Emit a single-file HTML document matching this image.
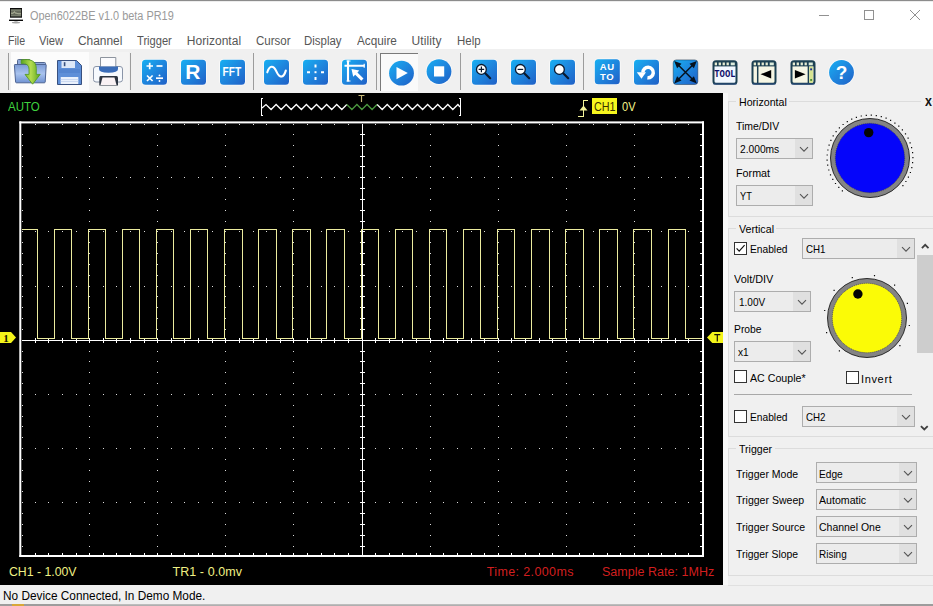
<!DOCTYPE html>
<html lang="en"><head><meta charset="utf-8"><title>Open6022BE v1.0 beta PR19</title>
<style>
html,body{margin:0;padding:0;background:#f0f0f0;}
#win{position:relative;width:933px;height:606px;overflow:hidden;background:#f0f0f0;font-family:"Liberation Sans", sans-serif;}
.abs{position:absolute;}
.t{position:absolute;transform-origin:0 0;white-space:nowrap;line-height:16px;height:16px;font-family:"Liberation Sans", sans-serif;}
.cb{position:absolute;border:1px solid #adadad;background:#ececec;}
.cbb{position:absolute;right:0;top:0;bottom:0;background:#e0e0e0;}
.ck{position:absolute;width:11px;height:11px;border:1px solid #333;background:#fff;}
.gb{position:absolute;border:1px solid #dcdcdc;box-sizing:border-box;}
</style></head>
<body><div id="win">
<div class="abs" style="left:0;top:0;width:933px;height:49px;background:#fff"></div>
<div class="abs" style="left:0;top:0;width:933px;height:1px;background:#8c8c8c"></div>
<div class="abs" style="left:0;top:1px;width:933px;height:1px;background:#ededed"></div>
<svg class="abs" style="left:8px;top:7px" width="16" height="17" viewBox="8 7 16 17"><rect x="10" y="8" width="12" height="9.7" fill="#0a0a0a"/><rect x="10.7" y="9.1" width="10.6" height="7.4" fill="#666a5c"/><path d="M11 13.2h2.4l1-1.6 1 1.6h1.6l0.8 0.6h3.2" stroke="#c8ccb0" stroke-width="0.8" fill="none"/><path d="M11 10.4h10M11 15.6h10" stroke="#8a8e80" stroke-width="0.6"/><rect x="9" y="19.6" width="14" height="1.4" fill="#0a0a0a"/><rect x="14.4" y="21" width="3.2" height="1.2" fill="#c4c4c4"/><ellipse cx="16" cy="22.6" rx="4.2" ry="0.9" fill="#a4a4a4"/></svg>
<svg class="abs" style="left:810px;top:4px" width="120" height="24" viewBox="810 4 120 24" shape-rendering="crispEdges"><path d="M819 15.5H829" stroke="#919191" stroke-width="1"/><rect x="864.5" y="10.5" width="9" height="9" fill="none" stroke="#919191" stroke-width="1"/><path d="M910 10L920 20M920 10L910 20" stroke="#919191" stroke-width="1" shape-rendering="geometricPrecision"/></svg>
<svg id="tb" width="933" height="44" viewBox="0 0 933 44" style="position:absolute;left:0;top:49px"><defs><linearGradient id="gb" x1="0" y1="0" x2="1" y2="1"><stop offset="0" stop-color="#17b0f2"/><stop offset="0.45" stop-color="#1e8ae0"/><stop offset="1" stop-color="#2060c6"/></linearGradient><linearGradient id="gf" x1="0" y1="0" x2="0" y2="1"><stop offset="0" stop-color="#7c9bd6"/><stop offset="0.5" stop-color="#a9c3ee"/><stop offset="1" stop-color="#6f92d2"/></linearGradient><linearGradient id="gg" x1="0" y1="0" x2="1" y2="0"><stop offset="0" stop-color="#5aa51e"/><stop offset="0.5" stop-color="#b4dc50"/><stop offset="1" stop-color="#5aa51e"/></linearGradient></defs><rect x="11" y="3" width="78" height="39" fill="#fcfcfc"/><rect x="89" y="3" width="40" height="39" fill="#f4f4f4"/><path d="M8.5 4V41" stroke="#9c9c9c" stroke-width="1" shape-rendering="crispEdges"/><path d="M130.5 4V41" stroke="#9c9c9c" stroke-width="1" shape-rendering="crispEdges"/><path d="M253.5 4V41" stroke="#9c9c9c" stroke-width="1" shape-rendering="crispEdges"/><path d="M376.5 4V41" stroke="#9c9c9c" stroke-width="1" shape-rendering="crispEdges"/><path d="M460.5 4V41" stroke="#9c9c9c" stroke-width="1" shape-rendering="crispEdges"/><path d="M583.5 4V41" stroke="#9c9c9c" stroke-width="1" shape-rendering="crispEdges"/><g transform="translate(0,-49)"><path d="M17.5 63V60.5Q17.5 59.5 18.5 59.5H29Q30 59.5 30.5 60.5L31.5 62.5H44.5Q45.5 62.5 45.5 63.5V65H17.5Z" fill="#8fa9da" stroke="#53678f" stroke-width="1"/><path d="M15 64.5H45.8Q46.3 64.5 46.2 65.2L45.2 82Q45.1 82.8 44.3 82.8H16.5Q15.7 82.8 15.6 82L14.4 65.2Q14.3 64.5 15 64.5Z" fill="url(#gf)" stroke="#4f6594" stroke-width="1"/><path d="M21.2 59.9C30 58.6 36.3 60.5 36.3 68.5V74.4H40.2L32.6 84.2L25 74.4H29V69.5C29 65 26.5 63.4 21.2 63.6Z" fill="url(#gg)" stroke="#4e961c" stroke-width="0.8"/></g><g transform="translate(0,-49)"><path d="M57.5 60.5H76.5L81.5 65.5V84.5H57.5Z" fill="#5e8fd8" stroke="#38507f" stroke-width="1"/><rect x="61.5" y="61" width="13.5" height="7" fill="#dde8f8"/><rect x="63.8" y="62.2" width="1.6" height="4" fill="#38507f"/><rect x="60.7" y="77" width="17.6" height="7" fill="#eaf1fc"/><path d="M60.7 79.5h17.6M60.7 81.5h17.6" stroke="#c3d3ee" stroke-width="0.8"/><rect x="59" y="69" width="21" height="4" fill="#4f7fcc" opacity="0.6"/></g><g transform="translate(0,-49)"><rect x="93.5" y="66.5" width="29" height="15.5" rx="2.5" fill="#f6f9fd" stroke="#8a95a8" stroke-width="1"/><path d="M100.5 67V57.5H115.8V67Z" fill="#fbfbfd" stroke="#8d949e" stroke-width="1"/><path d="M99 66.5H118V69Q118 72.8 108.5 72.8Q99 72.8 99 69Z" fill="#3a6cb8"/><path d="M100.5 76H116.5Q118 76 118 78V85.5H99.3V78Q99.3 76 100.5 76Z" fill="#2c3440"/><path d="M102.5 77.5H114.5L116.5 85H100.5Z" fill="#faf2f4"/></g><rect x="141.2" y="9.900000000000002" width="26.6" height="26.6" rx="4.2" fill="#fafafa"/><rect x="142" y="10.700000000000003" width="25" height="25" rx="3.5" fill="url(#gb)"/><g transform="translate(0,-49)" stroke="#fff" stroke-width="1.7" fill="none"><path d="M146.5 66H153M149.7 62.8V69.2"/><path d="M156.5 66H162.5"/><path d="M147 75.5L152.6 81M152.6 75.5L147 81"/><path d="M156 78.2H163"/></g><circle cx="159.5" cy="26.400000000000006" r="0.95" fill="#fff"/><circle cx="159.5" cy="32" r="0.95" fill="#fff"/><rect x="180.2" y="9.900000000000002" width="26.6" height="26.6" rx="4.2" fill="#fafafa"/><rect x="181" y="10.700000000000003" width="25" height="25" rx="3.5" fill="url(#gb)"/><text x="192.9" y="30.299999999999997" text-anchor="middle" font-family="Liberation Sans, sans-serif" font-weight="bold" font-size="21" fill="#fff">R</text><rect x="219.2" y="9.900000000000002" width="26.6" height="26.6" rx="4.2" fill="#fafafa"/><rect x="220" y="10.700000000000003" width="25" height="25" rx="3.5" fill="url(#gb)"/><text x="231.9" y="27" text-anchor="middle" font-family="Liberation Sans, sans-serif" font-weight="bold" font-size="12.4" fill="#fff" textLength="18.6" lengthAdjust="spacingAndGlyphs">FFT</text><rect x="263.2" y="9.900000000000002" width="26.6" height="26.6" rx="4.2" fill="#fafafa"/><rect x="264" y="10.700000000000003" width="25" height="25" rx="3.5" fill="url(#gb)"/><path d="M267.3 23.299999999999997C269.5 16 273.5 16 276.5 22.599999999999994S283.5 29.599999999999994 285.8 21.599999999999994" stroke="#fff" stroke-width="2.1" fill="none" stroke-linecap="round"/><rect x="302.2" y="9.900000000000002" width="26.6" height="26.6" rx="4.2" fill="#fafafa"/><rect x="303" y="10.700000000000003" width="25" height="25" rx="3.5" fill="url(#gb)"/><g transform="translate(0,-49)" stroke="#fff" stroke-width="2" fill="none"><path d="M315.5 64.5V67.5M315.5 77V80M307 72.2H310M321 72.2H324"/></g><rect x="314.5" y="22.200000000000003" width="2" height="2" fill="#fff"/><rect x="341.2" y="9.900000000000002" width="26.6" height="26.6" rx="4.2" fill="#fafafa"/><rect x="342" y="10.700000000000003" width="25" height="25" rx="3.5" fill="url(#gb)"/><g transform="translate(0,-49)" stroke="#fff" stroke-width="2.1" fill="none"><path d="M348 60.5V81.5M344.5 65.8H364.5"/><path d="M346.5 61h4M346.5 81h4M364.2 63.7v4" stroke-width="1.2"/></g><path d="M351.5 20L359.3 21.599999999999994L357.4 23.5L363.5 29.599999999999994L361.3 31.799999999999997L355.2 25.700000000000003L353.2 27.700000000000003Z" fill="#fff"/><rect x="381" y="5" width="37" height="37" fill="#fafafa"/><path d="M380.5 42V4.5H418" stroke="#7a7a7a" stroke-width="1" fill="none" shape-rendering="crispEdges"/><circle cx="401.5" cy="24.200000000000003" r="13.2" fill="#fafafa"/><circle cx="401.5" cy="24.200000000000003" r="12.4" fill="url(#gb)"/><path d="M396.5 18L407.8 24.099999999999994L396.5 30.200000000000003Z" fill="#fff"/><circle cx="439.0" cy="22.6" r="13.2" fill="#fafafa"/><circle cx="439.0" cy="22.6" r="12.4" fill="url(#gb)"/><rect x="434" y="17.299999999999997" width="10.2" height="10.2" fill="#fff"/><rect x="471.2" y="9.900000000000002" width="26.6" height="26.6" rx="4.2" fill="#fafafa"/><rect x="472" y="10.700000000000003" width="25" height="25" rx="3.5" fill="url(#gb)"/><path d="M484.7 23.700000000000006L490.2 29.200000000000006" stroke="#0a1a30" stroke-width="2.2" stroke-linecap="round"/><circle cx="481.4" cy="20.400000000000006" r="4.9" fill="#fff" stroke="#0a1a30" stroke-width="1.3"/><path d="M478.59999999999997 20.400000000000006H484.2M481.4 17.600000000000005V23.200000000000006" stroke="#0a1a30" stroke-width="1.2"/><rect x="510.2" y="9.900000000000002" width="26.6" height="26.6" rx="4.2" fill="#fafafa"/><rect x="511" y="10.700000000000003" width="25" height="25" rx="3.5" fill="url(#gb)"/><path d="M523.6999999999999 23.700000000000006L529.1999999999999 29.200000000000006" stroke="#0a1a30" stroke-width="2.2" stroke-linecap="round"/><circle cx="520.4" cy="20.400000000000006" r="4.9" fill="#fff" stroke="#0a1a30" stroke-width="1.3"/><path d="M517.6 20.400000000000006H523.1999999999999" stroke="#0a1a30" stroke-width="1.2"/><rect x="549.2" y="9.900000000000002" width="26.6" height="26.6" rx="4.2" fill="#fafafa"/><rect x="550" y="10.700000000000003" width="25" height="25" rx="3.5" fill="url(#gb)"/><path d="M562.6999999999999 23.700000000000006L568.1999999999999 29.200000000000006" stroke="#0a1a30" stroke-width="2.2" stroke-linecap="round"/><circle cx="559.4" cy="20.400000000000006" r="4.9" fill="#fff" stroke="#0a1a30" stroke-width="1.3"/><rect x="594.0" y="9.400000000000002" width="26.6" height="26.6" rx="4.2" fill="#fafafa"/><rect x="594.8" y="10.200000000000003" width="25" height="25" rx="3.5" fill="url(#gb)"/><text x="607.2" y="20.900000000000006" text-anchor="middle" font-family="Liberation Sans, sans-serif" font-weight="bold" font-size="9.5" fill="#fff" letter-spacing="0.6">AU</text><text x="607.2" y="30.599999999999994" text-anchor="middle" font-family="Liberation Sans, sans-serif" font-weight="bold" font-size="9.5" fill="#fff" letter-spacing="0.8">TO</text><rect x="633.2" y="9.900000000000002" width="26.6" height="26.6" rx="4.2" fill="#fafafa"/><rect x="634" y="10.700000000000003" width="25" height="25" rx="3.5" fill="url(#gb)"/><path d="M642.9 23.599999999999994A5.2 5.2 0 1 1 647.4 28.700000000000003" stroke="#fff" stroke-width="3.5" fill="none"/><path d="M636.8 23.299999999999997H646L641.5 29.799999999999997Z" fill="#fff"/><rect x="673.2" y="10.899999999999999" width="24.6" height="24.6" rx="3" fill="url(#gb)" stroke="#16304a" stroke-width="0.5"/><path d="M677 14.700000000000003L694 31.700000000000003M694 14.700000000000003L677 31.700000000000003" stroke="#06121e" stroke-width="1.5" fill="none"/><path d="M674.2 11.9L677.1 19.2L681.5 14.8ZM696.8 11.9L689.5 14.8L693.9 19.2ZM674.2 34.5L681.5 31.6L677.1 27.2ZM696.8 34.5L693.9 27.2L689.5 31.6Z" fill="#06121e"/><rect x="713.5" y="12.200000000000003" width="23" height="22.6" rx="2.6" fill="#f2f8ff" stroke="#1c4052" stroke-width="2"/><path d="M713.5 35H736.5" stroke="#2a4c88" stroke-width="0.9"/><path d="M713.5 13H736.5V17.400000000000006H713.5Z" fill="#1c4052"/><rect x="714.7" y="13.5" width="2.3" height="2.8" fill="#e6ecd2"/><rect x="718.6500000000001" y="13.5" width="2.3" height="2.8" fill="#e6ecd2"/><rect x="722.6" y="13.5" width="2.3" height="2.8" fill="#e6ecd2"/><rect x="726.5500000000001" y="13.5" width="2.3" height="2.8" fill="#e6ecd2"/><rect x="730.7" y="13.5" width="4.1" height="2.8" fill="#dcecdc"/><text x="724.9" y="27.900000000000006" text-anchor="middle" font-family="Liberation Mono, monospace" font-weight="bold" font-size="10" fill="#0e0e6a" textLength="21.4" lengthAdjust="spacingAndGlyphs">TOOL</text><rect x="752.5" y="12.200000000000003" width="23" height="22.6" rx="2.6" fill="#f6f6e4" stroke="#1c4052" stroke-width="2"/><path d="M752.5 35H775.5" stroke="#2a4c88" stroke-width="0.9"/><path d="M752.5 13H775.5V17.400000000000006H752.5Z" fill="#1c4052"/><rect x="753.7" y="13.5" width="2.3" height="2.8" fill="#e6ecd2"/><rect x="757.6500000000001" y="13.5" width="2.3" height="2.8" fill="#e6ecd2"/><rect x="761.6" y="13.5" width="2.3" height="2.8" fill="#e6ecd2"/><rect x="765.5500000000001" y="13.5" width="2.3" height="2.8" fill="#e6ecd2"/><rect x="769.7" y="13.5" width="4.1" height="2.8" fill="#dcecdc"/><path d="M757.7 17V34" stroke="#1c4052" stroke-width="1.5"/><path d="M760.5 25.200000000000003L771.2 21.099999999999994V29.5Z" fill="#000"/><rect x="791.5" y="12.200000000000003" width="23" height="22.6" rx="2.6" fill="#f6f6e4" stroke="#1c4052" stroke-width="2"/><path d="M791.5 35H814.5" stroke="#2a4c88" stroke-width="0.9"/><path d="M791.5 13H814.5V17.400000000000006H791.5Z" fill="#1c4052"/><rect x="792.7" y="13.5" width="2.3" height="2.8" fill="#e6ecd2"/><rect x="796.6500000000001" y="13.5" width="2.3" height="2.8" fill="#e6ecd2"/><rect x="800.6" y="13.5" width="2.3" height="2.8" fill="#e6ecd2"/><rect x="804.5500000000001" y="13.5" width="2.3" height="2.8" fill="#e6ecd2"/><rect x="808.7" y="13.5" width="4.1" height="2.8" fill="#dcecdc"/><path d="M808.4 17V34" stroke="#1c4052" stroke-width="1.5"/><path d="M805.6 25.200000000000003L794.9 21.099999999999994V29.5Z" fill="#000"/><rect x="809.3" y="17.599999999999994" width="3.6" height="16.2" fill="#d6e490"/><rect x="810.2" y="19.400000000000006" width="1.9" height="1.9" fill="#1a2a90"/><rect x="810.2" y="30" width="1.9" height="1.9" fill="#4a8a3a"/><circle cx="841.5" cy="23.4" r="13.2" fill="#fafafa"/><circle cx="841.5" cy="23.4" r="12.4" fill="url(#gb)"/><text x="841.6" y="30.400000000000006" text-anchor="middle" font-family="Liberation Sans, sans-serif" font-weight="bold" font-size="19" fill="#fff">?</text></svg>
<svg id="scope" width="723" height="492" viewBox="0 0 723 492" shape-rendering="crispEdges" style="position:absolute;left:0;top:93px;background:#000"><path d="M35 31.5h1M48 31.5h1M62 31.5h1M76 31.5h1M89 31.5h1M103 31.5h1M116 31.5h1M130 31.5h1M144 31.5h1M157 31.5h1M171 31.5h1M184 31.5h1M198 31.5h1M212 31.5h1M225 31.5h1M239 31.5h1M253 31.5h1M266 31.5h1M280 31.5h1M293 31.5h1M307 31.5h1M321 31.5h1M334 31.5h1M348 31.5h1M362 31.5h1M375 31.5h1M389 31.5h1M402 31.5h1M416 31.5h1M430 31.5h1M443 31.5h1M457 31.5h1M471 31.5h1M484 31.5h1M498 31.5h1M511 31.5h1M525 31.5h1M539 31.5h1M552 31.5h1M566 31.5h1M579 31.5h1M593 31.5h1M607 31.5h1M620 31.5h1M634 31.5h1M648 31.5h1M661 31.5h1M675 31.5h1M688 31.5h1M35 84.5h1M48 84.5h1M62 84.5h1M76 84.5h1M89 84.5h1M103 84.5h1M116 84.5h1M130 84.5h1M144 84.5h1M157 84.5h1M171 84.5h1M184 84.5h1M198 84.5h1M212 84.5h1M225 84.5h1M239 84.5h1M253 84.5h1M266 84.5h1M280 84.5h1M293 84.5h1M307 84.5h1M321 84.5h1M334 84.5h1M348 84.5h1M362 84.5h1M375 84.5h1M389 84.5h1M402 84.5h1M416 84.5h1M430 84.5h1M443 84.5h1M457 84.5h1M471 84.5h1M484 84.5h1M498 84.5h1M511 84.5h1M525 84.5h1M539 84.5h1M552 84.5h1M566 84.5h1M579 84.5h1M593 84.5h1M607 84.5h1M620 84.5h1M634 84.5h1M648 84.5h1M661 84.5h1M675 84.5h1M688 84.5h1M35 138.5h1M48 138.5h1M62 138.5h1M76 138.5h1M89 138.5h1M103 138.5h1M116 138.5h1M130 138.5h1M144 138.5h1M157 138.5h1M171 138.5h1M184 138.5h1M198 138.5h1M212 138.5h1M225 138.5h1M239 138.5h1M253 138.5h1M266 138.5h1M280 138.5h1M293 138.5h1M307 138.5h1M321 138.5h1M334 138.5h1M348 138.5h1M362 138.5h1M375 138.5h1M389 138.5h1M402 138.5h1M416 138.5h1M430 138.5h1M443 138.5h1M457 138.5h1M471 138.5h1M484 138.5h1M498 138.5h1M511 138.5h1M525 138.5h1M539 138.5h1M552 138.5h1M566 138.5h1M579 138.5h1M593 138.5h1M607 138.5h1M620 138.5h1M634 138.5h1M648 138.5h1M661 138.5h1M675 138.5h1M688 138.5h1M35 193.5h1M48 193.5h1M62 193.5h1M76 193.5h1M89 193.5h1M103 193.5h1M116 193.5h1M130 193.5h1M144 193.5h1M157 193.5h1M171 193.5h1M184 193.5h1M198 193.5h1M212 193.5h1M225 193.5h1M239 193.5h1M253 193.5h1M266 193.5h1M280 193.5h1M293 193.5h1M307 193.5h1M321 193.5h1M334 193.5h1M348 193.5h1M362 193.5h1M375 193.5h1M389 193.5h1M402 193.5h1M416 193.5h1M430 193.5h1M443 193.5h1M457 193.5h1M471 193.5h1M484 193.5h1M498 193.5h1M511 193.5h1M525 193.5h1M539 193.5h1M552 193.5h1M566 193.5h1M579 193.5h1M593 193.5h1M607 193.5h1M620 193.5h1M634 193.5h1M648 193.5h1M661 193.5h1M675 193.5h1M688 193.5h1M35 301.5h1M48 301.5h1M62 301.5h1M76 301.5h1M89 301.5h1M103 301.5h1M116 301.5h1M130 301.5h1M144 301.5h1M157 301.5h1M171 301.5h1M184 301.5h1M198 301.5h1M212 301.5h1M225 301.5h1M239 301.5h1M253 301.5h1M266 301.5h1M280 301.5h1M293 301.5h1M307 301.5h1M321 301.5h1M334 301.5h1M348 301.5h1M362 301.5h1M375 301.5h1M389 301.5h1M402 301.5h1M416 301.5h1M430 301.5h1M443 301.5h1M457 301.5h1M471 301.5h1M484 301.5h1M498 301.5h1M511 301.5h1M525 301.5h1M539 301.5h1M552 301.5h1M566 301.5h1M579 301.5h1M593 301.5h1M607 301.5h1M620 301.5h1M634 301.5h1M648 301.5h1M661 301.5h1M675 301.5h1M688 301.5h1M35 355.5h1M48 355.5h1M62 355.5h1M76 355.5h1M89 355.5h1M103 355.5h1M116 355.5h1M130 355.5h1M144 355.5h1M157 355.5h1M171 355.5h1M184 355.5h1M198 355.5h1M212 355.5h1M225 355.5h1M239 355.5h1M253 355.5h1M266 355.5h1M280 355.5h1M293 355.5h1M307 355.5h1M321 355.5h1M334 355.5h1M348 355.5h1M362 355.5h1M375 355.5h1M389 355.5h1M402 355.5h1M416 355.5h1M430 355.5h1M443 355.5h1M457 355.5h1M471 355.5h1M484 355.5h1M498 355.5h1M511 355.5h1M525 355.5h1M539 355.5h1M552 355.5h1M566 355.5h1M579 355.5h1M593 355.5h1M607 355.5h1M620 355.5h1M634 355.5h1M648 355.5h1M661 355.5h1M675 355.5h1M688 355.5h1M35 409.5h1M48 409.5h1M62 409.5h1M76 409.5h1M89 409.5h1M103 409.5h1M116 409.5h1M130 409.5h1M144 409.5h1M157 409.5h1M171 409.5h1M184 409.5h1M198 409.5h1M212 409.5h1M225 409.5h1M239 409.5h1M253 409.5h1M266 409.5h1M280 409.5h1M293 409.5h1M307 409.5h1M321 409.5h1M334 409.5h1M348 409.5h1M362 409.5h1M375 409.5h1M389 409.5h1M402 409.5h1M416 409.5h1M430 409.5h1M443 409.5h1M457 409.5h1M471 409.5h1M484 409.5h1M498 409.5h1M511 409.5h1M525 409.5h1M539 409.5h1M552 409.5h1M566 409.5h1M579 409.5h1M593 409.5h1M607 409.5h1M620 409.5h1M634 409.5h1M648 409.5h1M661 409.5h1M675 409.5h1M688 409.5h1M22 41.5h1M22 52.5h1M22 63.5h1M22 73.5h1M22 84.5h1M22 95.5h1M22 106.5h1M22 117.5h1M22 128.5h1M22 138.5h1M22 149.5h1M22 160.5h1M22 171.5h1M22 182.5h1M22 193.5h1M22 203.5h1M22 214.5h1M22 225.5h1M22 236.5h1M22 247.5h1M22 258.5h1M22 268.5h1M22 279.5h1M22 290.5h1M22 301.5h1M22 312.5h1M22 323.5h1M22 333.5h1M22 344.5h1M22 355.5h1M22 366.5h1M22 377.5h1M22 388.5h1M22 398.5h1M22 409.5h1M22 420.5h1M22 431.5h1M22 442.5h1M22 453.5h1M89 41.5h1M89 52.5h1M89 63.5h1M89 73.5h1M89 84.5h1M89 95.5h1M89 106.5h1M89 117.5h1M89 128.5h1M89 138.5h1M89 149.5h1M89 160.5h1M89 171.5h1M89 182.5h1M89 193.5h1M89 203.5h1M89 214.5h1M89 225.5h1M89 236.5h1M89 247.5h1M89 258.5h1M89 268.5h1M89 279.5h1M89 290.5h1M89 301.5h1M89 312.5h1M89 323.5h1M89 333.5h1M89 344.5h1M89 355.5h1M89 366.5h1M89 377.5h1M89 388.5h1M89 398.5h1M89 409.5h1M89 420.5h1M89 431.5h1M89 442.5h1M89 453.5h1M157 41.5h1M157 52.5h1M157 63.5h1M157 73.5h1M157 84.5h1M157 95.5h1M157 106.5h1M157 117.5h1M157 128.5h1M157 138.5h1M157 149.5h1M157 160.5h1M157 171.5h1M157 182.5h1M157 193.5h1M157 203.5h1M157 214.5h1M157 225.5h1M157 236.5h1M157 247.5h1M157 258.5h1M157 268.5h1M157 279.5h1M157 290.5h1M157 301.5h1M157 312.5h1M157 323.5h1M157 333.5h1M157 344.5h1M157 355.5h1M157 366.5h1M157 377.5h1M157 388.5h1M157 398.5h1M157 409.5h1M157 420.5h1M157 431.5h1M157 442.5h1M157 453.5h1M225 41.5h1M225 52.5h1M225 63.5h1M225 73.5h1M225 84.5h1M225 95.5h1M225 106.5h1M225 117.5h1M225 128.5h1M225 138.5h1M225 149.5h1M225 160.5h1M225 171.5h1M225 182.5h1M225 193.5h1M225 203.5h1M225 214.5h1M225 225.5h1M225 236.5h1M225 247.5h1M225 258.5h1M225 268.5h1M225 279.5h1M225 290.5h1M225 301.5h1M225 312.5h1M225 323.5h1M225 333.5h1M225 344.5h1M225 355.5h1M225 366.5h1M225 377.5h1M225 388.5h1M225 398.5h1M225 409.5h1M225 420.5h1M225 431.5h1M225 442.5h1M225 453.5h1M293 41.5h1M293 52.5h1M293 63.5h1M293 73.5h1M293 84.5h1M293 95.5h1M293 106.5h1M293 117.5h1M293 128.5h1M293 138.5h1M293 149.5h1M293 160.5h1M293 171.5h1M293 182.5h1M293 193.5h1M293 203.5h1M293 214.5h1M293 225.5h1M293 236.5h1M293 247.5h1M293 258.5h1M293 268.5h1M293 279.5h1M293 290.5h1M293 301.5h1M293 312.5h1M293 323.5h1M293 333.5h1M293 344.5h1M293 355.5h1M293 366.5h1M293 377.5h1M293 388.5h1M293 398.5h1M293 409.5h1M293 420.5h1M293 431.5h1M293 442.5h1M293 453.5h1M430 41.5h1M430 52.5h1M430 63.5h1M430 73.5h1M430 84.5h1M430 95.5h1M430 106.5h1M430 117.5h1M430 128.5h1M430 138.5h1M430 149.5h1M430 160.5h1M430 171.5h1M430 182.5h1M430 193.5h1M430 203.5h1M430 214.5h1M430 225.5h1M430 236.5h1M430 247.5h1M430 258.5h1M430 268.5h1M430 279.5h1M430 290.5h1M430 301.5h1M430 312.5h1M430 323.5h1M430 333.5h1M430 344.5h1M430 355.5h1M430 366.5h1M430 377.5h1M430 388.5h1M430 398.5h1M430 409.5h1M430 420.5h1M430 431.5h1M430 442.5h1M430 453.5h1M498 41.5h1M498 52.5h1M498 63.5h1M498 73.5h1M498 84.5h1M498 95.5h1M498 106.5h1M498 117.5h1M498 128.5h1M498 138.5h1M498 149.5h1M498 160.5h1M498 171.5h1M498 182.5h1M498 193.5h1M498 203.5h1M498 214.5h1M498 225.5h1M498 236.5h1M498 247.5h1M498 258.5h1M498 268.5h1M498 279.5h1M498 290.5h1M498 301.5h1M498 312.5h1M498 323.5h1M498 333.5h1M498 344.5h1M498 355.5h1M498 366.5h1M498 377.5h1M498 388.5h1M498 398.5h1M498 409.5h1M498 420.5h1M498 431.5h1M498 442.5h1M498 453.5h1M566 41.5h1M566 52.5h1M566 63.5h1M566 73.5h1M566 84.5h1M566 95.5h1M566 106.5h1M566 117.5h1M566 128.5h1M566 138.5h1M566 149.5h1M566 160.5h1M566 171.5h1M566 182.5h1M566 193.5h1M566 203.5h1M566 214.5h1M566 225.5h1M566 236.5h1M566 247.5h1M566 258.5h1M566 268.5h1M566 279.5h1M566 290.5h1M566 301.5h1M566 312.5h1M566 323.5h1M566 333.5h1M566 344.5h1M566 355.5h1M566 366.5h1M566 377.5h1M566 388.5h1M566 398.5h1M566 409.5h1M566 420.5h1M566 431.5h1M566 442.5h1M566 453.5h1M634 41.5h1M634 52.5h1M634 63.5h1M634 73.5h1M634 84.5h1M634 95.5h1M634 106.5h1M634 117.5h1M634 128.5h1M634 138.5h1M634 149.5h1M634 160.5h1M634 171.5h1M634 182.5h1M634 193.5h1M634 203.5h1M634 214.5h1M634 225.5h1M634 236.5h1M634 247.5h1M634 258.5h1M634 268.5h1M634 279.5h1M634 290.5h1M634 301.5h1M634 312.5h1M634 323.5h1M634 333.5h1M634 344.5h1M634 355.5h1M634 366.5h1M634 377.5h1M634 388.5h1M634 398.5h1M634 409.5h1M634 420.5h1M634 431.5h1M634 442.5h1M634 453.5h1" stroke="#dcdcdc" stroke-width="1" fill="none"/><path d="M700 41.5h2M700 52.5h2M700 63.5h2M700 73.5h2M700 84.5h2M700 95.5h2M700 106.5h2M700 117.5h2M700 128.5h2M700 138.5h2M700 149.5h2M700 160.5h2M700 171.5h2M700 182.5h2M700 193.5h2M700 203.5h2M700 214.5h2M700 225.5h2M700 236.5h2M700 247.5h2M700 258.5h2M700 268.5h2M700 279.5h2M700 290.5h2M700 301.5h2M700 312.5h2M700 323.5h2M700 333.5h2M700 344.5h2M700 355.5h2M700 366.5h2M700 377.5h2M700 388.5h2M700 398.5h2M700 409.5h2M700 420.5h2M700 431.5h2M700 442.5h2M700 453.5h2" stroke="#fff" stroke-width="1" fill="none"/><path d="M35.5 460v2M48.5 460v2M62.5 460v2M76.5 460v2M89.5 460v2M103.5 460v2M116.5 460v2M130.5 460v2M144.5 460v2M157.5 460v2M171.5 460v2M184.5 460v2M198.5 460v2M212.5 460v2M225.5 460v2M239.5 460v2M253.5 460v2M266.5 460v2M280.5 460v2M293.5 460v2M307.5 460v2M321.5 460v2M334.5 460v2M348.5 460v2M362.5 460v2M375.5 460v2M389.5 460v2M402.5 460v2M416.5 460v2M430.5 460v2M443.5 460v2M457.5 460v2M471.5 460v2M484.5 460v2M498.5 460v2M511.5 460v2M525.5 460v2M539.5 460v2M552.5 460v2M566.5 460v2M579.5 460v2M593.5 460v2M607.5 460v2M620.5 460v2M634.5 460v2M648.5 460v2M661.5 460v2M675.5 460v2M688.5 460v2" stroke="#fff" stroke-width="1" fill="none"/><path d="M362.5 31V462M22 247.5H702M360 41.5h5M360 52.5h5M360 63.5h5M360 73.5h5M360 84.5h5M360 95.5h5M360 106.5h5M360 117.5h5M360 128.5h5M360 138.5h5M360 149.5h5M360 160.5h5M360 171.5h5M360 182.5h5M360 193.5h5M360 203.5h5M360 214.5h5M360 225.5h5M360 236.5h5M360 247.5h5M360 258.5h5M360 268.5h5M360 279.5h5M360 290.5h5M360 301.5h5M360 312.5h5M360 323.5h5M360 333.5h5M360 344.5h5M360 355.5h5M360 366.5h5M360 377.5h5M360 388.5h5M360 398.5h5M360 409.5h5M360 420.5h5M360 431.5h5M360 442.5h5M360 453.5h5M35.5 245v5M48.5 245v5M62.5 245v5M76.5 245v5M89.5 245v5M103.5 245v5M116.5 245v5M130.5 245v5M144.5 245v5M157.5 245v5M171.5 245v5M184.5 245v5M198.5 245v5M212.5 245v5M225.5 245v5M239.5 245v5M253.5 245v5M266.5 245v5M280.5 245v5M293.5 245v5M307.5 245v5M321.5 245v5M334.5 245v5M348.5 245v5M362.5 245v5M375.5 245v5M389.5 245v5M402.5 245v5M416.5 245v5M430.5 245v5M443.5 245v5M457.5 245v5M471.5 245v5M484.5 245v5M498.5 245v5M511.5 245v5M525.5 245v5M539.5 245v5M552.5 245v5M566.5 245v5M579.5 245v5M593.5 245v5M607.5 245v5M620.5 245v5M634.5 245v5M648.5 245v5M661.5 245v5M675.5 245v5M688.5 245v5" stroke="#fff" stroke-width="1" fill="none"/><g shape-rendering="geometricPrecision" fill="#fff"><rect x="19.3" y="28.400000000000006" width="684.7" height="2"/><rect x="19.3" y="28.400000000000006" width="2" height="435.6"/><rect x="702" y="28.400000000000006" width="2" height="435.6"/><rect x="19.3" y="462" width="684.7" height="2"/></g><path d="M22 136.5H37.5V245.5H54.5V136.5H71.5V245.5H88.5V136.5H105.5V245.5H122.5V136.5H139.5V245.5H156.5V136.5H173.5V245.5H190.5V136.5H207.5V245.5H224.5V136.5H242.5V245.5H258.5V136.5H276.5V245.5H292.5V136.5H310.5V245.5H326.5V136.5H344.5V245.5H361.5V136.5H378.5V245.5H395.5V136.5H412.5V245.5H429.5V136.5H446.5V245.5H463.5V136.5H480.5V245.5H497.5V136.5H514.5V245.5H531.5V136.5H549.5V245.5H565.5V136.5H583.5V245.5H599.5V136.5H617.5V245.5H633.5V136.5H651.5V245.5H668.5V136.5H685.5V245.5H702" stroke="#ebeb9e" stroke-width="1" fill="none"/><path d="M263 5.5H261.5V22.5H263" stroke="#fff" stroke-width="1" fill="none"/><path d="M459 5.5H460.5V22.5H459" stroke="#fff" stroke-width="1" fill="none"/><polyline points="262.0,15.0 266.0,11.5 271.1,16.5 276.1,11.5 281.2,16.5 286.2,11.5 291.2,16.5 296.3,11.5 301.4,16.5 306.4,11.5 311.4,16.5 316.5,11.5 321.6,16.5 326.6,11.5 331.7,16.5 336.7,11.5 341.8,16.5 346.8,11.5" stroke="#fff" stroke-width="1.25" fill="none" shape-rendering="geometricPrecision"/><polyline points="346.8,11.5 351.9,16.5 356.9,11.5 361.9,16.5 367.0,11.5 372.1,16.5 377.1,11.5" stroke="#4c9a40" stroke-width="1.25" fill="none" shape-rendering="geometricPrecision"/><polyline points="377.1,11.5 382.2,16.5 387.2,11.5 392.2,16.5 397.3,11.5 402.3,16.5 407.4,11.5 412.4,16.5 417.5,11.5 422.6,16.5 427.6,11.5 432.7,16.5 437.7,11.5 442.8,16.5 447.8,11.5 452.8,16.5 457.9,11.5 460.0,14.0" stroke="#fff" stroke-width="1.25" fill="none" shape-rendering="geometricPrecision"/><path d="M358.5 2.5h6M361.5 2.5v6.5" stroke="#c8b878" stroke-width="1.15" fill="none" shape-rendering="geometricPrecision"/><path d="M578 23.5H583.5V7.5H588" stroke="#f4f49a" stroke-width="1" fill="none"/><path d="M583.5 12.5L587.5 17.5H579.5Z" fill="#f4f49a" shape-rendering="geometricPrecision"/><rect x="592" y="5" width="25" height="16" fill="#f6f61e"/><path d="M0 239H11L16 244.5L11 250H0Z" fill="#f4f41a" shape-rendering="geometricPrecision"/><path d="M723 239H712.3L707 244.5L712.3 250H723Z" fill="#f4f41a" shape-rendering="geometricPrecision"/><path d="M714.3 241.60000000000002h6M717.3 241.60000000000002v7" stroke="#1a1400" stroke-width="1.2" fill="none" shape-rendering="geometricPrecision"/><text x="3.2" y="248.60000000000002" font-family="Liberation Serif, serif" font-weight="bold" font-size="11" fill="#1a1400">1</text></svg>
<div class="abs" style="left:723px;top:93px;width:5px;height:492px;background:#f8f8f8"></div>
<div class="gb" style="left:728px;top:101px;width:210px;height:116px;border-right:none;"></div><div class="abs" style="left:736px;top:101px;width:53px;height:1px;background:#f0f0f0"></div><div class="abs" style="left:921px;top:97px;width:11px;height:11px;background:#f0f0f0"></div><div class="gb" style="left:728px;top:228px;width:210px;height:209px;border-right:none;"></div><div class="abs" style="left:736px;top:228px;width:40px;height:1px;background:#f0f0f0"></div><div class="gb" style="left:728px;top:448px;width:210px;height:128px;border-right:none;"></div><div class="abs" style="left:736px;top:448px;width:39px;height:1px;background:#f0f0f0"></div><div class="cb" style="left:736px;top:138px;width:75px;height:19px"><div class="cbb" style="width:17px"></div></div><svg class="abs" style="left:798.5px;top:145.5px" width="10" height="7" viewBox="0 0 10 7"><path d="M1 1.2L5 5.2L9 1.2" stroke="#555" stroke-width="1.1" fill="none"/></svg><div class="cb" style="left:736px;top:185px;width:75px;height:19px"><div class="cbb" style="width:17px"></div></div><svg class="abs" style="left:798.5px;top:192.5px" width="10" height="7" viewBox="0 0 10 7"><path d="M1 1.2L5 5.2L9 1.2" stroke="#555" stroke-width="1.1" fill="none"/></svg><svg class="abs" style="left:824.2px;top:112px" width="92" height="92" viewBox="824.2 112 92 92"><path d="M842.0 190.9h1.2M838.4 187.4h1.2M835.1 183.5h1.2M832.4 179.3h1.2M830.1 174.8h1.2M828.4 170.0h1.2M827.3 165.1h1.2M826.7 160.1h1.2M826.8 155.0h1.2M827.5 150.0h1.2M828.7 145.1h1.2M830.5 140.4h1.2M832.8 135.9h1.2M835.7 131.7h1.2M839.0 127.9h1.2M842.7 124.5h1.2M846.9 121.6h1.2M851.3 119.2h1.2M856.0 117.3h1.2M860.9 116.0h1.2M865.9 115.3h1.2M870.9 115.1h1.2M875.9 115.6h1.2M880.9 116.6h1.2M885.7 118.2h1.2M890.2 120.4h1.2M894.5 123.1h1.2M898.4 126.2h1.2M902.0 129.9h1.2M905.1 133.9h1.2M907.7 138.2h1.2M909.7 142.8h1.2M911.2 147.6h1.2M912.2 152.6h1.2M912.5 157.6h1.2M912.2 162.7h1.2M911.4 167.7h1.2M910.0 172.5h1.2M908.0 177.1h1.2M905.5 181.5h1.2M902.5 185.6h1.2" stroke="#0a0a0a" stroke-width="1.2" fill="none"/><circle cx="870.2" cy="158" r="39.5" fill="#848484" stroke="#1c1c1c" stroke-width="0.9"/><circle cx="870.2" cy="158" r="34.7" fill="#0505fa" stroke="#333" stroke-width="0.6" stroke-dasharray="1 1"/><circle cx="868.9" cy="132.6" r="4.7" fill="#050505"/></svg><span class="t" id="p_x" style="left:925px;top:93.1px;font-size:14.5px;font-weight:bold;color:#111;transform:scaleX(0.86)">x</span><div class="ck" style="left:734px;top:242px"></div><svg class="abs" style="left:734px;top:242px" width="13" height="13" viewBox="0 0 13 13"><path d="M2.6 6.4L5.2 9.2L10.6 3.2" stroke="#111" stroke-width="1.2" fill="none"/></svg><div class="cb" style="left:802px;top:238px;width:111px;height:19px"><div class="cbb" style="width:17px"></div></div><svg class="abs" style="left:900.5px;top:245.5px" width="10" height="7" viewBox="0 0 10 7"><path d="M1 1.2L5 5.2L9 1.2" stroke="#555" stroke-width="1.1" fill="none"/></svg><div class="cb" style="left:734px;top:291px;width:75px;height:19px"><div class="cbb" style="width:17px"></div></div><svg class="abs" style="left:796.5px;top:298.5px" width="10" height="7" viewBox="0 0 10 7"><path d="M1 1.2L5 5.2L9 1.2" stroke="#555" stroke-width="1.1" fill="none"/></svg><div class="cb" style="left:734px;top:341px;width:75px;height:19px"><div class="cbb" style="width:17px"></div></div><svg class="abs" style="left:796.5px;top:348.5px" width="10" height="7" viewBox="0 0 10 7"><path d="M1 1.2L5 5.2L9 1.2" stroke="#555" stroke-width="1.1" fill="none"/></svg><svg class="abs" style="left:821.1px;top:271.8px" width="92" height="92" viewBox="821.1 271.8 92 92"><path d="M838.9 350.7h1.2M826.1 332.5h1.2M824.2 310.3h1.2M833.6 290.2h1.2M851.8 277.4h1.2M874.0 275.5h1.2M894.1 284.9h1.2M906.9 303.1h1.2M908.8 325.3h1.2M899.4 345.4h1.2" stroke="#0a0a0a" stroke-width="1.2" fill="none"/><circle cx="867.1" cy="317.8" r="39.5" fill="#848484" stroke="#1c1c1c" stroke-width="0.9"/><circle cx="867.1" cy="317.8" r="34.7" fill="#fbfb06" stroke="#333" stroke-width="0.6" stroke-dasharray="1 1"/><circle cx="858.0" cy="293.8" r="4.7" fill="#050505"/></svg><div class="ck" style="left:734px;top:370px"></div><div class="ck" style="left:846px;top:371px"></div><div class="abs" style="left:734px;top:394px;width:178px;height:1px;background:#a8a8a8"></div><div class="ck" style="left:734px;top:410px"></div><div class="cb" style="left:802px;top:406px;width:111px;height:19px"><div class="cbb" style="width:17px"></div></div><svg class="abs" style="left:900.5px;top:413.5px" width="10" height="7" viewBox="0 0 10 7"><path d="M1 1.2L5 5.2L9 1.2" stroke="#555" stroke-width="1.1" fill="none"/></svg><div class="abs" style="left:917px;top:238px;width:16px;height:198px;background:#f0f0f0"></div><div class="abs" style="left:917px;top:255px;width:16px;height:98px;background:#cdcdcd"></div><svg class="abs" style="left:919.5px;top:242px" width="11" height="8" viewBox="0 0 11 8"><path d="M1.9 6.1L5.2 2.8L8.5 6.1" stroke="#404040" stroke-width="1.8" fill="none"/></svg><svg class="abs" style="left:919px;top:424px" width="11" height="8" viewBox="0 0 11 8"><path d="M1.9 2.1L5.3 5.5L8.7 2.1" stroke="#404040" stroke-width="1.8" fill="none"/></svg><div class="cb" style="left:816px;top:462px;width:99px;height:19px"><div class="cbb" style="width:17px"></div></div><svg class="abs" style="left:902.5px;top:469.5px" width="10" height="7" viewBox="0 0 10 7"><path d="M1 1.2L5 5.2L9 1.2" stroke="#555" stroke-width="1.1" fill="none"/></svg><div class="cb" style="left:816px;top:489px;width:99px;height:19px"><div class="cbb" style="width:17px"></div></div><svg class="abs" style="left:902.5px;top:496.5px" width="10" height="7" viewBox="0 0 10 7"><path d="M1 1.2L5 5.2L9 1.2" stroke="#555" stroke-width="1.1" fill="none"/></svg><div class="cb" style="left:816px;top:516px;width:99px;height:19px"><div class="cbb" style="width:17px"></div></div><svg class="abs" style="left:902.5px;top:523.5px" width="10" height="7" viewBox="0 0 10 7"><path d="M1 1.2L5 5.2L9 1.2" stroke="#555" stroke-width="1.1" fill="none"/></svg><div class="cb" style="left:816px;top:543px;width:99px;height:19px"><div class="cbb" style="width:17px"></div></div><svg class="abs" style="left:902.5px;top:550.5px" width="10" height="7" viewBox="0 0 10 7"><path d="M1 1.2L5 5.2L9 1.2" stroke="#555" stroke-width="1.1" fill="none"/></svg>
<div class="abs" style="left:0;top:585px;width:933px;height:19px;background:#f0f0f0"></div>
<div class="abs" style="left:728px;top:585px;width:205px;height:1px;background:#e0e0e0"></div>
<div class="abs" style="left:0;top:604px;width:933px;height:2px;background:linear-gradient(#c4c4c4,#a8a8a8)"></div>
<div class="abs" style="left:0;top:604px;width:80px;height:2px;background:#9c9c9c"></div>
<div class="abs" style="left:12px;top:604px;width:12px;height:2px;background:#d8a838"></div>
<div class="abs" style="left:880px;top:604px;width:53px;height:2px;background:#9c9c9c"></div>
<span class="t" id="t_title" style="left:30.00px;top:8.14px;font-size:12px;color:#9a9a9a;letter-spacing:0.000px;transform:scaleX(0.9089);">Open6022BE v1.0 beta PR19</span>
<span class="t" id="m_file" style="left:7.50px;top:32.94px;font-size:12px;color:#565656;letter-spacing:0.000px;transform:scaleX(0.8850);">File</span>
<span class="t" id="m_view" style="left:39.40px;top:32.94px;font-size:12px;color:#565656;letter-spacing:0.000px;transform:scaleX(0.9339);">View</span>
<span class="t" id="m_chan" style="left:78.20px;top:32.94px;font-size:12px;color:#565656;letter-spacing:0.000px;transform:scaleX(0.9924);">Channel</span>
<span class="t" id="m_trig" style="left:136.70px;top:32.94px;font-size:12px;color:#565656;letter-spacing:0.000px;transform:scaleX(0.9263);">Trigger</span>
<span class="t" id="m_horz" style="left:186.80px;top:32.94px;font-size:12px;color:#565656;letter-spacing:0.027px;">Horizontal</span>
<span class="t" id="m_curs" style="left:255.50px;top:32.94px;font-size:12px;color:#565656;letter-spacing:0.000px;transform:scaleX(0.9609);">Cursor</span>
<span class="t" id="m_disp" style="left:304.30px;top:32.94px;font-size:12px;color:#565656;letter-spacing:0.000px;transform:scaleX(0.9531);">Display</span>
<span class="t" id="m_acq" style="left:356.60px;top:32.94px;font-size:12px;color:#565656;letter-spacing:0.000px;transform:scaleX(0.9802);">Acquire</span>
<span class="t" id="m_util" style="left:411.50px;top:32.94px;font-size:12px;color:#565656;letter-spacing:0.111px;">Utility</span>
<span class="t" id="m_help" style="left:456.50px;top:32.94px;font-size:12px;color:#565656;letter-spacing:0.000px;transform:scaleX(0.9558);">Help</span>
<span class="t" id="s_auto" style="left:8.10px;top:98.57px;font-size:12.5px;color:#3fd23f;letter-spacing:0.000px;transform:scaleX(0.9231);">AUTO</span>
<span class="t" id="s_ch1" style="left:593.60px;top:99.07px;font-size:12.5px;color:#3a3000;letter-spacing:0.000px;transform:scaleX(0.8621);">CH1</span>
<span class="t" id="s_0v" style="left:621.90px;top:99.07px;font-size:12.5px;color:#f4f48a;letter-spacing:0.000px;transform:scaleX(0.8839);">0V</span>
<span class="t" id="s_ch1v" style="left:8.60px;top:563.57px;font-size:12.5px;color:#f0f084;letter-spacing:0.000px;transform:scaleX(0.9821);">CH1 - 1.00V</span>
<span class="t" id="s_tr1" style="left:172.50px;top:563.57px;font-size:12.5px;color:#f0f084;letter-spacing:0.069px;">TR1 - 0.0mv</span>
<span class="t" id="s_time" style="left:486.70px;top:563.57px;font-size:12.5px;color:#d21f1f;letter-spacing:0.379px;">Time: 2.000ms</span>
<span class="t" id="s_rate" style="left:602.00px;top:563.57px;font-size:12.5px;color:#d21f1f;letter-spacing:0.025px;">Sample Rate: 1MHz</span>
<span class="t" id="st" style="left:3.00px;top:587.54px;font-size:12px;color:#000;letter-spacing:0.000px;transform:scaleX(0.9849);">No Device Connected, In Demo Mode.</span>
<span class="t" id="p_horz" style="left:738.60px;top:94.19px;font-size:11px;color:#000;letter-spacing:0.000px;transform:scaleX(0.9658);">Horizontal</span>
<span class="t" id="p_time" style="left:736.20px;top:118.39px;font-size:11px;color:#000;letter-spacing:0.000px;transform:scaleX(0.9503);">Time/DIV</span>
<span class="t" id="p_2ms" style="left:740.30px;top:140.69px;font-size:11px;color:#000;letter-spacing:0.000px;transform:scaleX(0.9300);">2.000ms</span>
<span class="t" id="p_fmt" style="left:736.00px;top:165.19px;font-size:11px;color:#000;letter-spacing:0.000px;transform:scaleX(0.9776);">Format</span>
<span class="t" id="p_yt" style="left:740.00px;top:187.59px;font-size:11px;color:#000;letter-spacing:0.000px;transform:scaleX(0.8370);">YT</span>
<span class="t" id="p_vert" style="left:738.70px;top:220.79px;font-size:11px;color:#000;letter-spacing:0.000px;transform:scaleX(0.9711);">Vertical</span>
<span class="t" id="p_en1" style="left:749.60px;top:241.19px;font-size:11px;color:#000;letter-spacing:0.000px;transform:scaleX(0.9292);">Enabled</span>
<span class="t" id="p_ch1" style="left:805.60px;top:241.19px;font-size:11px;color:#000;letter-spacing:0.000px;transform:scaleX(0.8863);">CH1</span>
<span class="t" id="p_volt" style="left:734.00px;top:271.19px;font-size:11px;color:#000;letter-spacing:0.000px;transform:scaleX(0.9900);">Volt/DIV</span>
<span class="t" id="p_1v" style="left:739.20px;top:293.89px;font-size:11px;color:#000;letter-spacing:0.000px;transform:scaleX(0.9113);">1.00V</span>
<span class="t" id="p_probe" style="left:733.60px;top:320.99px;font-size:11px;color:#000;letter-spacing:0.000px;transform:scaleX(0.9372);">Probe</span>
<span class="t" id="p_x1" style="left:738.40px;top:343.89px;font-size:11px;color:#000;letter-spacing:0.000px;transform:scaleX(0.9217);">x1</span>
<span class="t" id="p_ac" style="left:749.70px;top:369.99px;font-size:11px;color:#000;letter-spacing:0.000px;transform:scaleX(0.9674);">AC Couple*</span>
<span class="t" id="p_inv" style="left:861.00px;top:370.59px;font-size:11px;color:#000;letter-spacing:0.649px;">Invert</span>
<span class="t" id="p_en2" style="left:749.60px;top:408.79px;font-size:11px;color:#000;letter-spacing:0.000px;transform:scaleX(0.9292);">Enabled</span>
<span class="t" id="p_ch2" style="left:805.60px;top:408.79px;font-size:11px;color:#000;letter-spacing:0.000px;transform:scaleX(0.8863);">CH2</span>
<span class="t" id="p_trig" style="left:738.90px;top:441.49px;font-size:11px;color:#000;letter-spacing:0.000px;transform:scaleX(0.9606);">Trigger</span>
<span class="t" id="p_tm" style="left:736.00px;top:465.59px;font-size:11px;color:#000;letter-spacing:0.000px;transform:scaleX(0.9555);">Trigger Mode</span>
<span class="t" id="p_edge" style="left:819.40px;top:465.59px;font-size:11px;color:#000;letter-spacing:0.000px;transform:scaleX(0.9229);">Edge</span>
<span class="t" id="p_ts" style="left:736.00px;top:492.39px;font-size:11px;color:#000;letter-spacing:0.000px;transform:scaleX(0.9577);">Trigger Sweep</span>
<span class="t" id="p_auto" style="left:819.40px;top:492.39px;font-size:11px;color:#000;letter-spacing:0.000px;transform:scaleX(0.9634);">Automatic</span>
<span class="t" id="p_tsrc" style="left:736.00px;top:519.19px;font-size:11px;color:#000;letter-spacing:0.000px;transform:scaleX(0.9553);">Trigger Source</span>
<span class="t" id="p_chone" style="left:819.40px;top:519.19px;font-size:11px;color:#000;letter-spacing:0.000px;transform:scaleX(0.9520);">Channel One</span>
<span class="t" id="p_tsl" style="left:736.00px;top:546.19px;font-size:11px;color:#000;letter-spacing:0.000px;transform:scaleX(0.9465);">Trigger Slope</span>
<span class="t" id="p_rise" style="left:819.40px;top:546.19px;font-size:11px;color:#000;letter-spacing:0.000px;transform:scaleX(0.9064);">Rising</span>
</div></body></html>
